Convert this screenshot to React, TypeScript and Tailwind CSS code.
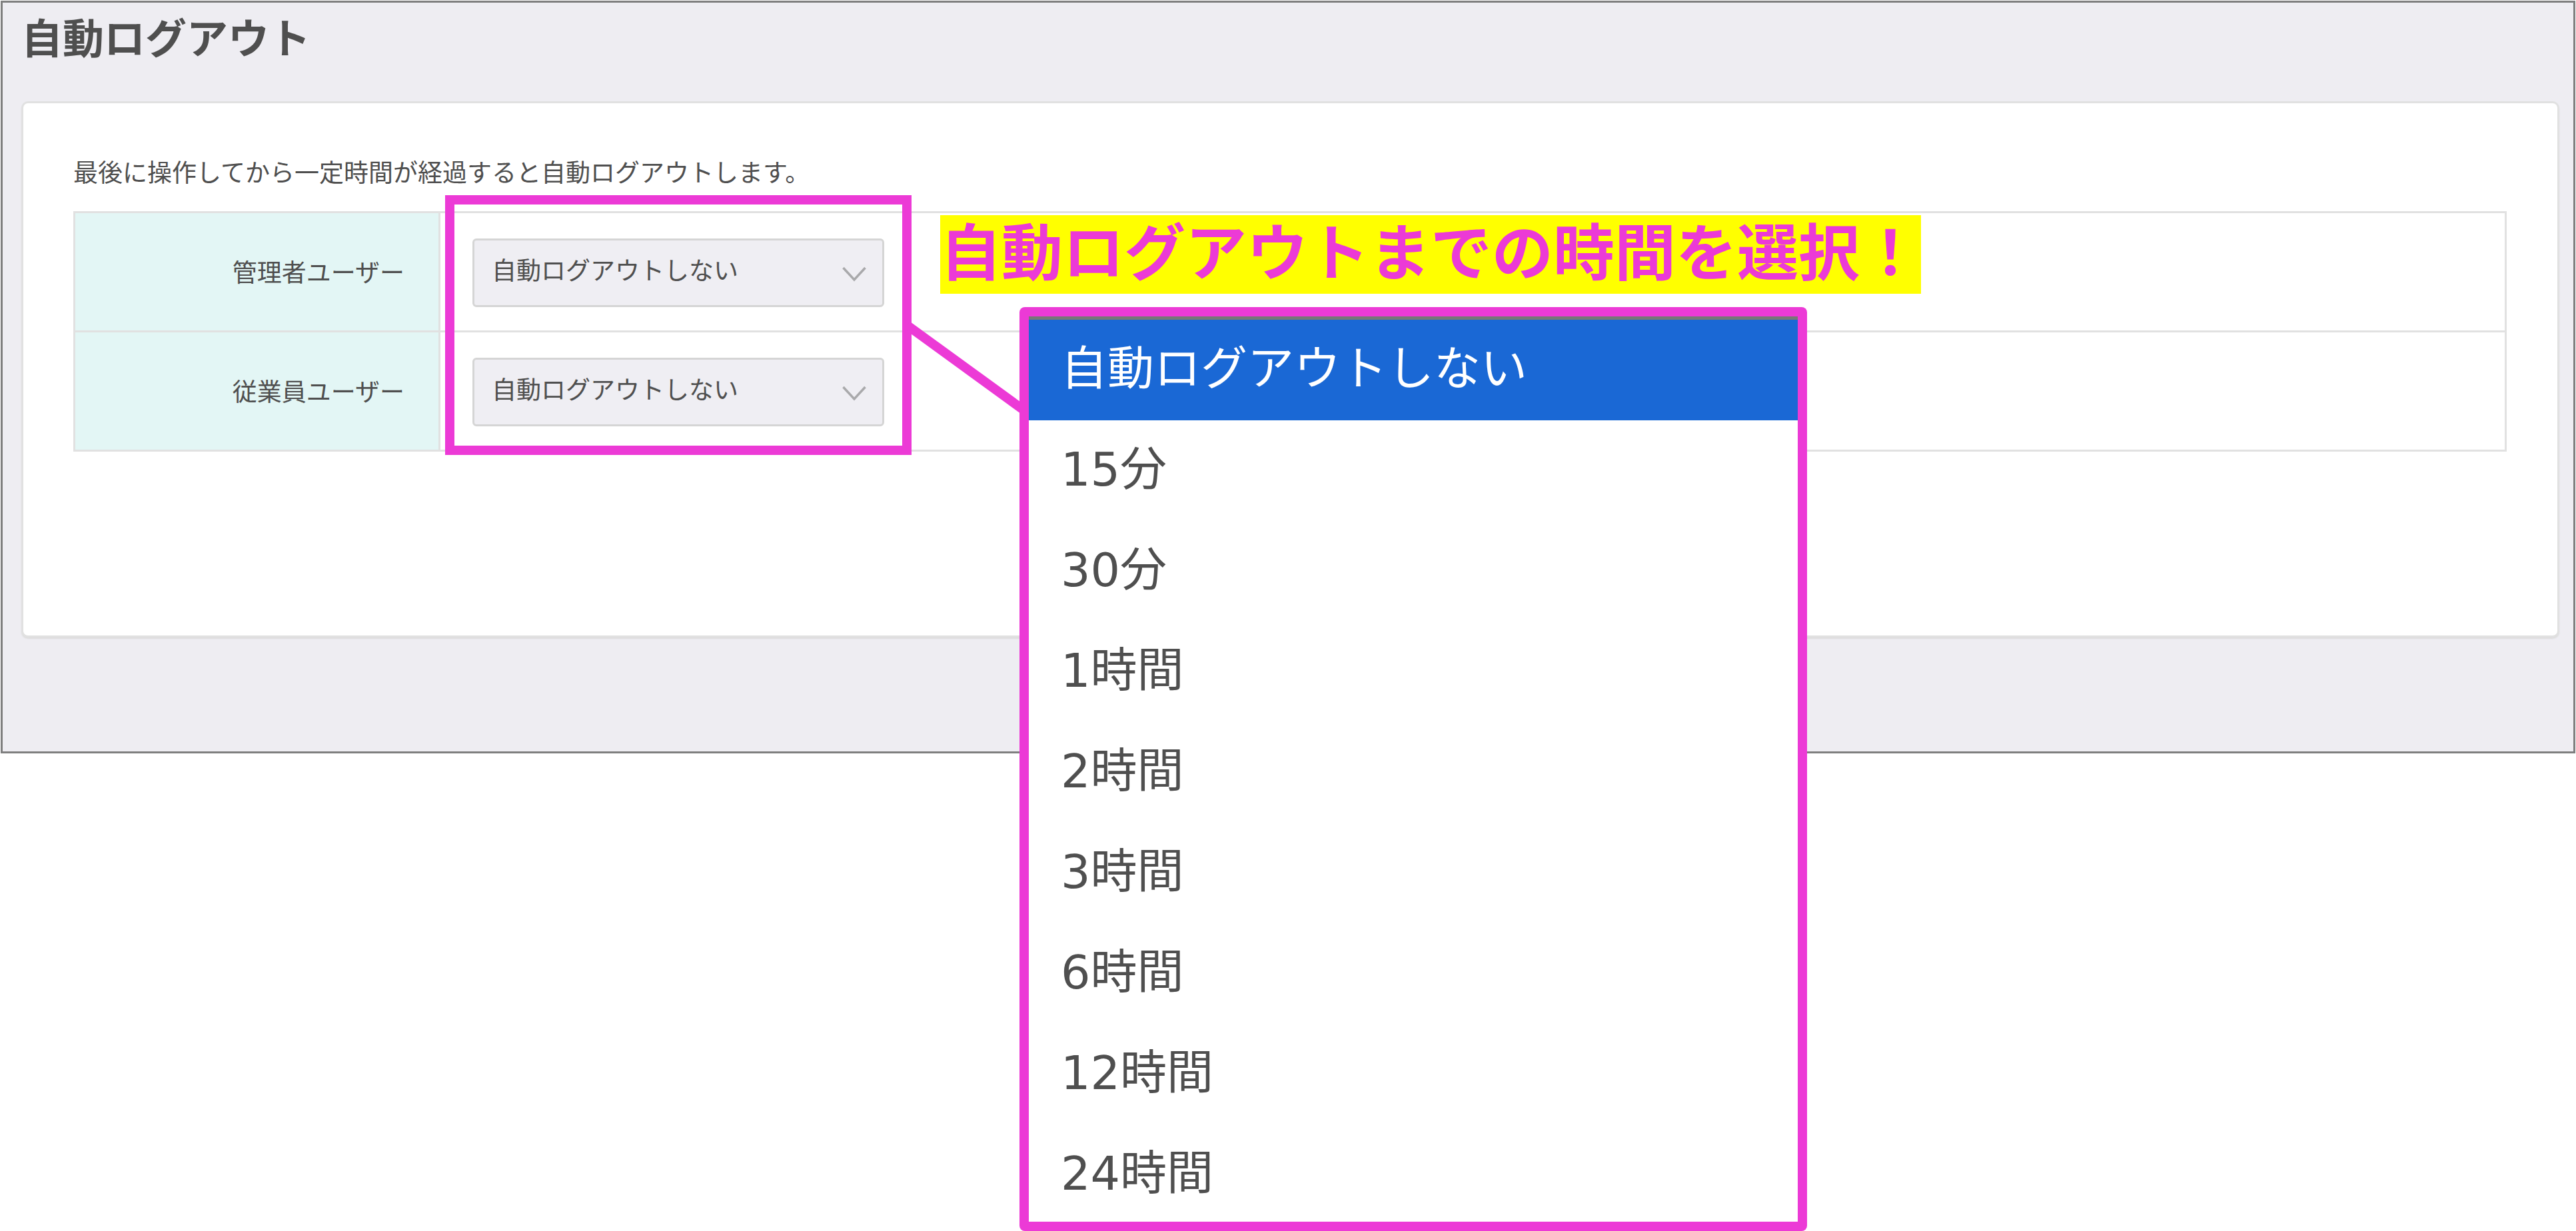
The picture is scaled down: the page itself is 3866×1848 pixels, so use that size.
import { useState } from "react";

type UserKind = "admin" | "employee";

const OPTIONS = [
  "自動ログアウトしない",
  "15分",
  "30分",
  "1時間",
  "2時間",
  "3時間",
  "6時間",
  "12時間",
  "24時間",
];

const ROWS: { id: UserKind; label: string }[] = [
  { id: "admin", label: "管理者ユーザー" },
  { id: "employee", label: "従業員ユーザー" },
];

function TimeSelect({ id, value, onChange }: { id: string; value: string; onChange: (v: string) => void }) {
  return (
    <div className="relative w-[618px]">
      <select
        id={id}
        value={value}
        onChange={(e) => onChange(e.target.value)}
        className="block h-[103px] w-full appearance-none rounded-md border-3 border-[#d5d5d5] bg-[#efeef3] pr-20 pb-1 pl-[26px] text-[37px] text-[#4f4f4f]"
      >
        {OPTIONS.map((o) => (
          <option key={o}>{o}</option>
        ))}
      </select>
      <svg
        viewBox="0 0 36 24"
        className="pointer-events-none absolute top-[42px] right-[27px] h-6 w-9"
        fill="none"
        stroke="#a9a9ab"
        strokeWidth="3.5"
      >
        <path d="M1.5 2 L18 20 L34.5 2" />
      </svg>
    </div>
  );
}

export default function App() {
  const [values, setValues] = useState<Record<UserKind, string>>({
    admin: OPTIONS[0],
    employee: OPTIONS[0],
  });

  function update(kind: UserKind, value: string) {
    setValues((v) => ({ ...v, [kind]: value }));
  }

  return (
    <div className="relative min-h-screen overflow-hidden bg-white p-px font-['DejaVu_Sans','Noto_Sans_CJK_JP',sans-serif] text-[#4f4f4f]">
      <main className="border-3 border-[#7f7f7f] bg-[#eeedf2] pr-[21px] pb-[171px] pl-7">
        <h1 className="pt-2 pb-11 text-[62px] leading-[96px] font-bold">自動ログアウト</h1>

        <section className="rounded-[10px] border-3 border-[#e1e1e1] bg-white pt-[82px] pr-[76px] pb-[276px] pl-[75px] shadow-[0_2px_2px_#dcdcdc]">
          <p className="text-[37px] leading-[48px]">最後に操作してから一定時間が経過すると自動ログアウトします。</p>
          <table className="mt-8 w-full border-collapse text-[37px]">
            <tbody>
              {ROWS.map((r) => (
                <tr key={r.id}>
                  <th className="w-[548px] border-3 border-[#e1e1e1] bg-[#e3f6f5] pt-1.5 pr-[51px] text-right font-normal">
                    <label htmlFor={r.id}>{r.label}</label>
                  </th>
                  <td className="border-3 border-[#e1e1e1] pt-[38px] pb-[35px] pl-12">
                    <TimeSelect id={r.id} value={values[r.id]} onChange={(v) => update(r.id, v)} />
                  </td>
                </tr>
              ))}
            </tbody>
          </table>
        </section>
      </main>

      {/* frame round the two selects */}
      <div className="pointer-events-none absolute top-[293px] left-[668px] h-[390px] w-[700px] border-14 border-[#ec3ad6]" />

      {/* connector from frame to list */}
      <svg
        viewBox="0 0 176 140"
        className="pointer-events-none absolute top-[484px] left-[1361px] h-[140px] w-[176px]"
        stroke="#ec3ad6"
        strokeWidth="14"
      >
        <path d="M0 4 L176 132" />
      </svg>

      <p className="absolute top-[323px] left-[1411px] bg-[#ffff00] text-[92px] leading-[118px] font-bold whitespace-nowrap text-[#ec3ad6]">
        自動ログアウトまでの時間を選択！
      </p>

      {/* opened option list */}
      <div
        role="listbox"
        aria-label="自動ログアウト"
        className="absolute top-[461px] left-[1530px] flex w-[1182px] flex-col rounded-lg bg-[#ec3ad6] p-[14px]"
      >
        <div className="flex flex-col border-t-5 border-[#777777] bg-white">
          {OPTIONS.map((o) => (
            <button
              key={o}
              type="button"
              role="option"
              aria-selected={values.admin === o}
              onClick={() => update("admin", o)}
              className={`pt-[29px] pb-[31px] pl-12 text-left text-[70px] leading-[91px] last:pb-[26px] ${
                values.admin === o ? "bg-[#1a68d5] text-white" : "bg-white"
              }`}
            >
              {o}
            </button>
          ))}
        </div>
      </div>
    </div>
  );
}
